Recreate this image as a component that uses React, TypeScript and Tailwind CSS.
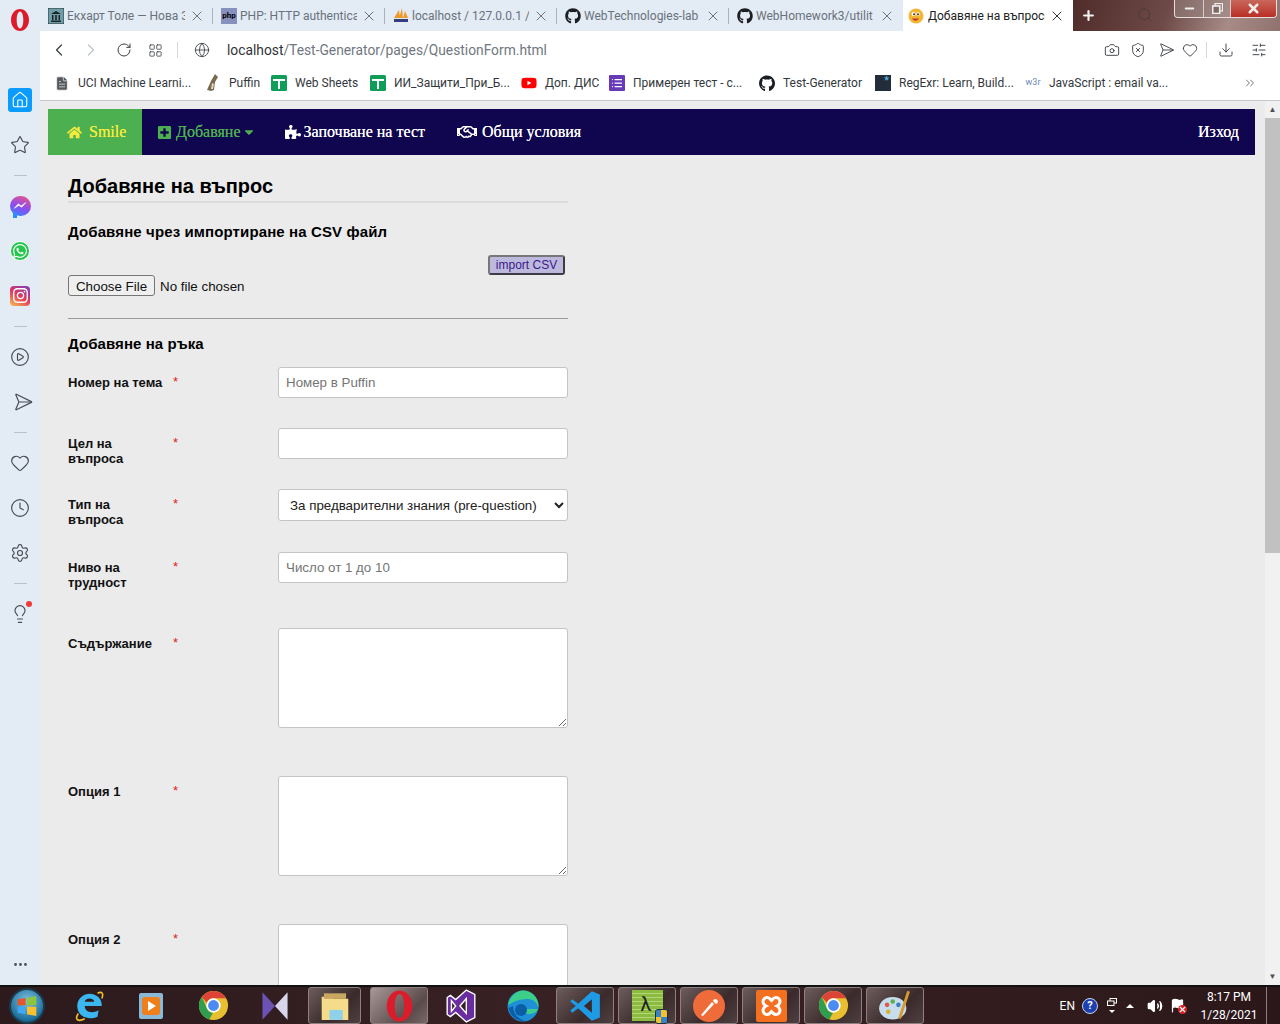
import {
  ChevronLeft,
  ChevronRight,
  RotateCw,
  LayoutGrid,
  Globe,
  Camera,
  ShieldX,
  Send,
  Heart,
  Download,
  SlidersHorizontal,
  X,
  Plus,
  Minus,
  Search,
  Home,
  Star,
  CirclePlay,
  Clock,
  Settings,
  Lightbulb,
  MoreHorizontal,
  ChevronsRight,
  FileText,
  Volume2,
  Flag,
  List,
} from 'lucide-react';
import { FaGithub, FaHome, FaPlusSquare, FaPuzzlePiece, FaRegHandshake, FaCaretDown, FaYoutube, FaWhatsapp, FaInstagram } from 'react-icons/fa';
import type { ReactNode } from 'react';

const uiFont = "font-['Roboto','Noto_Sans',sans-serif]";

const OperaLogo = ({ width, height }: { width: number; height: number }) => (
  <svg width={width} height={height} viewBox="0 0 20 24">
    <path fillRule="evenodd" d="M10 1c5 0 9 4.800 9 11s-4 11-9 11-9-4.800-9-11S5 1 10 1zm0 2.500c-2 0-3.300 3.800-3.300 8.500s1.300 8.500 3.300 8.500 3.300-3.800 3.300-8.500S12 3.500 10 3.500z" fill="#dd1c2b" />
  </svg>
);

const Chrome = ({ size = 32 }: { size?: number }) => (
  <svg width={size} height={size} viewBox="0 0 32 32">
    <circle cx="16" cy="16" r="15" fill="#e8c02f" />
    <path d="M16 1a15 15 0 0 1 13 7.500H16a7.500 7.500 0 0 0-7 4.600L3.900 7.200A15 15 0 0 1 16 1z" fill="#dc4437" />
    <path d="M3.900 7.200 9.500 19.500a7.500 7.500 0 0 0 6 4L11.600 30.400A15 15 0 0 1 3.900 7.200z" fill="#2f9e50" />
    <circle cx="16" cy="16" r="7.400" fill="#fff" />
    <circle cx="16" cy="16" r="5.600" fill="#4c8bf0" />
  </svg>
);

const TabItem = ({ icon, title, width, last }: { icon: ReactNode; title: string; width: string; last?: boolean }) => (
  <div className={`${width} relative flex h-full items-center pl-[8px] pr-[8px]`}>
    <span className="mr-[3px] flex h-4 w-4 shrink-0 items-center justify-center">{icon}</span>
    <span className="min-w-0 flex-1 overflow-hidden whitespace-nowrap pt-[1px] text-[12px] text-[#69727c]">{title}</span>
    <X size={16} strokeWidth={1.2} className="ml-[4px] shrink-0 text-[#4c5560]" />
    {!last && <span className="absolute right-0 top-[8px] h-[16px] w-px bg-[#aab3bd]" />}
  </div>
);

const Bookmark = ({ icon, title, width }: { icon: ReactNode; title: string; width: string }) => (
  <div className={`${width} flex items-center`}>
    <span className="mr-[8px] flex h-[16px] w-[16px] shrink-0 items-center justify-center">{icon}</span>
    <span className="whitespace-nowrap text-[12px] text-[#33383d]">{title}</span>
  </div>
);

const SheetIcon = () => (
  <svg width="16" height="16" viewBox="0 0 16 16">
    <rect width="16" height="16" rx="1.500" fill="#0f9d58" />
    <path d="M2 4h12v2H9v8H7V6H2z" fill="#fff" />
  </svg>
);

const SideCell = ({ children }: { children: ReactNode }) => (
  <div className="flex h-[45px] shrink-0 items-center justify-center">{children}</div>
);

const SideDivider = () => (
  <div className="flex h-[16px] shrink-0 items-center">
    <div className="h-px w-[13px] bg-[#b9c2cc]" />
  </div>
);

const Row = ({ label, height, children }: { label: ReactNode; height: string; children: ReactNode }) => (
  <div className={`${height} flex items-start`}>
    <div className="w-[105px] pt-[8px] text-[13px] font-bold leading-[15px] text-[#111]">{label}</div>
    <div className="w-[105px] pt-[7px] text-[13px] leading-[15px] text-[#e02020]">*</div>
    <div className="w-[290px]">{children}</div>
  </div>
);

const textBox = 'block w-full rounded-[3px] border border-[#c4c4c4] bg-white px-[7px] text-[13.333px] text-[#333] placeholder:text-[#757575] outline-none';

const TaskButton = ({ children, active, width = 'w-[58px]', margin = 'mr-[4px]' }: { children: ReactNode; active?: boolean; width?: string; margin?: string }) => (
  <div
    className={`${width} ${margin} flex h-[37px] shrink-0 items-center justify-center rounded-[3px] border border-[#8d8080] ${
      active ? 'bg-[linear-gradient(135deg,#a99898,#5b4a4a_70%,#7a6868)]' : 'bg-[linear-gradient(135deg,#6d5c5c,#3a2a2b_60%,#4f3f40)]'
    }`}
  >
    {children}
  </div>
);

const TaskPlain = ({ children, width = 'w-[62px]' }: { children: ReactNode; width?: string }) => (
  <div className={`${width} flex h-[37px] shrink-0 items-center justify-center`}>{children}</div>
);

export default function App() {
  return (
    <div className={`flex h-[1024px] w-[1280px] flex-col overflow-hidden bg-[#ebebeb] ${uiFont}`}>
      <div className="flex h-[985px] min-h-0">
        {/* opera sidebar */}
        <aside className="flex w-[40px] shrink-0 flex-col items-center bg-[#e3ebf4] text-[#474d54]">
          <div className="mt-[8px]">
            <OperaLogo width={20} height={24} />
          </div>
          <div className="mt-[46px] flex h-[44px] items-center">
            <div className="flex h-[24px] w-[24px] items-center justify-center rounded-[3px] bg-[#0a9bff]">
              <Home size={18} strokeWidth={1.5} color="#fff" />
            </div>
          </div>
          <SideCell><Star size={20} strokeWidth={1.4} /></SideCell>
          <SideDivider />
          <SideCell>
            <div className="relative flex h-[20px] w-[21px] items-center justify-center rounded-full bg-[linear-gradient(200deg,#f0567e,#8a4df0_55%,#2b8cff)]">
              <svg width="14" height="9" viewBox="0 0 12 8">
                <path d="M1 6.500 4.500 2.500 7 4.500 11 1.500 7.500 5.500 5 3.800z" fill="#fff" stroke="#fff" strokeWidth=".6" />
              </svg>
              <span className="absolute bottom-[-2px] left-[3px] h-[5px] w-[4px] bg-[#2b8cff]" />
            </div>
          </SideCell>
          <SideCell>
            <div className="flex h-[20px] w-[20px] items-center justify-center rounded-full border border-white bg-[#25c64e]">
              <FaWhatsapp size={16} color="#fff" />
            </div>
          </SideCell>
          <SideCell>
            <div className="flex h-[20px] w-[20px] items-center justify-center rounded-[4px] bg-[linear-gradient(30deg,#f9c04a,#e0385f_50%,#7a3fc0)]">
              <FaInstagram size={17} color="#fff" />
            </div>
          </SideCell>
          <SideDivider />
          <SideCell><CirclePlay size={20} strokeWidth={1.4} /></SideCell>
          <SideCell><Send size={20} strokeWidth={1.4} className="rotate-45" /></SideCell>
          <SideDivider />
          <SideCell><Heart size={20} strokeWidth={1.4} /></SideCell>
          <SideCell><Clock size={20} strokeWidth={1.4} /></SideCell>
          <SideCell><Settings size={20} strokeWidth={1.4} /></SideCell>
          <SideDivider />
          <SideCell>
            <div className="relative">
              <Lightbulb size={20} strokeWidth={1.4} />
              <span className="absolute right-[-2px] top-[-3px] h-[6px] w-[6px] rounded-full bg-[#f03a3a]" />
            </div>
          </SideCell>
          <MoreHorizontal size={17} className="mt-auto mb-[12px]" />
        </aside>

        <div className="flex min-w-0 flex-1 flex-col">
          {/* tab strip */}
          <div className="flex h-[31px] shrink-0 items-stretch bg-[#e3ebf4]">
            <TabItem
              width="w-[173px]"
              title="Екхарт Толе — Нова З"
              icon={
                <svg width="16" height="16" viewBox="0 0 16 16">
                  <rect width="16" height="16" fill="#6e9fa8" stroke="#2d3438" />
                  <path d="M3 6 8 3l5 3zM4 7h1.500v5H4zM7.200 7h1.600v5H7.200zM10.500 7H12v5h-1.500zM3 12.500h10V14H3z" fill="#1c2226" />
                </svg>
              }
            />
            <TabItem width="w-[172px]" title="PHP: HTTP authenticat" icon={<div className="flex h-4 w-4 items-center justify-center bg-[#8890bd] text-[8px] font-bold text-black">php</div>} />
            <TabItem
              width="w-[172px]"
              title="localhost / 127.0.0.1 /"
              icon={
                <svg width="16" height="15" viewBox="0 0 16 15">
                  <path d="M1 10 6 2l1 8zM6 10l3-10 1 10zM10 10l2-7 3 7z" fill="#ee9a2b" />
                  <rect x="1" y="11" width="14" height="3" fill="#333f7a" />
                </svg>
              }
            />
            <TabItem width="w-[172px]" title="WebTechnologies-lab" icon={<FaGithub size={16} color="#1b1f23" />} />
            <TabItem width="w-[174px]" last title="WebHomework3/utilit" icon={<FaGithub size={16} color="#1b1f23" />} />
            <div className="flex w-[170px] items-center bg-white pl-[5px] pr-[8px]">
              <svg width="16" height="16" viewBox="0 0 16 16" className="mr-[4px] shrink-0">
                <circle cx="8" cy="8" r="7.500" fill="#f2b632" />
                <circle cx="5.500" cy="6" r="2" fill="#fff" />
                <circle cx="10" cy="6" r="1.800" fill="#fff" />
                <circle cx="6" cy="6.300" r="1" fill="#333" />
                <circle cx="10" cy="6.300" r="1" fill="#333" />
                <path d="M4 10.500c2 3 5 3 7 0z" fill="#c8342c" />
              </svg>
              <span className="min-w-0 flex-1 overflow-hidden whitespace-nowrap pt-[1px] text-[12px] text-[#222]">Добавяне на въпроси</span>
              <X size={16} strokeWidth={1.4} className="ml-[4px] shrink-0 text-[#222]" />
            </div>
            <div className="relative flex flex-1 items-start bg-[linear-gradient(110deg,#4f2b29,#6d4a48_45%,#a78b87_75%,#8f726e)]">
              <Plus size={15} strokeWidth={3.5} color="#f4f0ee" className="ml-[8px] mt-[8px]" />
              <Search size={16} strokeWidth={1.4} className="ml-[41px] mt-[7px] text-[#4c3a38]" />
              <div className="absolute right-[3px] top-0 flex h-[18px] w-[103px] overflow-hidden rounded-b-[4px] border border-t-0 border-[#e5dedc]">
                <div className="flex w-[29px] items-center justify-center border-r border-[#d5cbc9] bg-[#a3938f66]"><Minus size={13} strokeWidth={3.5} color="#eee" /></div>
                <div className="flex w-[27px] items-center justify-center border-r border-[#d5cbc9] bg-[#a3938f66]">
                  <svg width="11" height="11" viewBox="0 0 11 11">
                    <rect x="3" y="0.500" width="7.500" height="7.500" fill="none" stroke="#eee" strokeWidth="1.200" />
                    <rect x="0.700" y="3" width="7" height="7.500" fill="#7e6966" stroke="#eee" strokeWidth="1.600" />
                  </svg>
                </div>
                <div className="flex flex-1 items-center justify-center bg-[linear-gradient(#c9675c,#b92f25)]"><X size={15} strokeWidth={4} color="#f2ecea" /></div>
              </div>
            </div>
          </div>

          {/* address bar */}
          <div className="flex h-[38px] shrink-0 items-center bg-white text-[#3a4046]">
            <ChevronLeft size={20} strokeWidth={1.5} className="ml-[9px]" />
            <ChevronRight size={20} strokeWidth={1.5} className="ml-[12px] text-[#bfc5cb]" />
            <RotateCw size={16} strokeWidth={1.5} className="ml-[15px]" />
            <LayoutGrid size={15} strokeWidth={1.3} className="ml-[16px]" />
            <div className="ml-[14px] h-[16px] w-px bg-[#d5d8dc]" />
            <Globe size={16} strokeWidth={1.3} className="ml-[16px]" />
            <div className="ml-[17px] flex-1 text-[13.8px]">
              <span className="text-[#2f3338]">localhost</span>
              <span className="text-[#6f7780]">/Test-Generator/pages/QuestionForm.html</span>
            </div>
            <Camera size={16} strokeWidth={1.4} />
            <ShieldX size={16} strokeWidth={1.4} className="ml-[10px]" />
            <Send size={16} strokeWidth={1.3} className="ml-[10px] rotate-45" />
            <Heart size={16} strokeWidth={1.4} className="ml-[10px]" />
            <div className="ml-[8px] h-[16px] w-px bg-[#d5d8dc]" />
            <Download size={16} strokeWidth={1.4} className="ml-[11px]" />
            <SlidersHorizontal size={16} strokeWidth={1.4} className="ml-[17px] mr-[13px]" />
          </div>

          {/* bookmarks */}
          <div className="flex h-[32px] shrink-0 items-center border-b border-[#c3c8ce] bg-white pb-[3px] pl-[14px]">
            <Bookmark width="w-[151px]" title="UCI Machine Learni..." icon={<FileText size={17} fill="#55595e" stroke="#fff" strokeWidth={1} />} />
            <Bookmark
              width="w-[66px]"
              title="Puffin"
              icon={
                <svg width="14" height="18" viewBox="0 0 14 18">
                  <path d="M9 0 12 3 9 8 8 16 5 17 1 16 5 7z" fill="#7b6a4e" />
                  <path d="M6 9 8 10 7 15 5 15z" fill="#ddd6c4" />
                </svg>
              }
            />
            <Bookmark width="w-[99px]" title="Web Sheets" icon={<SheetIcon />} />
            <Bookmark width="w-[151px]" title="ИИ_Защити_При_Б..." icon={<SheetIcon />} />
            <Bookmark width="w-[88px]" title="Доп. ДИС" icon={<FaYoutube size={16} color="#f00" />} />
            <Bookmark width="w-[150px]" title="Примерен тест - с..." icon={<div className="flex h-4 w-4 items-center justify-center rounded-[1px] bg-[#673ab7]"><List size={12} color="#fff" strokeWidth={2.5} /></div>} />
            <Bookmark width="w-[116px]" title="Test-Generator" icon={<FaGithub size={17} color="#1b1f23" />} />
            <Bookmark width="w-[150px]" title="RegExr: Learn, Build..." icon={<div className="flex h-4 w-4 items-start justify-end bg-[#232c3b] pr-[2px] text-[11px] leading-[12px] text-[#5ec5ee]">*</div>} />
            <Bookmark width="w-[218px]" title="JavaScript : email va..." icon={<span className="text-[9px] text-[#6b86b8]">w3r</span>} />
            <ChevronsRight size={14} strokeWidth={1.3} className="text-[#444a50]" />
          </div>

          {/* page */}
          <div className="relative flex min-h-0 flex-1 overflow-hidden bg-[#ebebeb]">
            <div className="min-w-0 flex-1 pl-[8px] pt-[8px]">
              <nav className="flex h-[46px] w-[1207px] items-center bg-[#10054f] font-['Liberation_Serif',serif] text-[16px] text-white [text-shadow:0_0_0.5px_currentColor]">
                <div className="flex h-full w-[94px] items-center bg-[#4caf50] pl-[19px] text-[#f6eb3c]">
                  <FaHome size={15} className="mr-[7px]" />
                  Smile
                </div>
                <div className="ml-[15px] flex items-center text-[#4caf50]">
                  <FaPlusSquare size={15} className="mr-[4px]" />
                  Добавяне
                  <FaCaretDown size={14} className="ml-[1px]" />
                </div>
                <div className="ml-[29px] flex items-center">
                  <FaPuzzlePiece size={16} className="mr-[3px]" />
                  Започване на тест
                </div>
                <div className="ml-[32px] flex items-center">
                  <FaRegHandshake size={20} className="mr-[5px]" />
                  Общи условия
                </div>
                <div className="ml-auto mr-[16px]">Изход</div>
              </nav>

              <main className="ml-[20px] w-[500px] font-['Liberation_Sans',Arial,sans-serif] text-[#111]">
                <h1 className="mt-[20px] border-b-2 border-[#dcdcdc] pb-[3px] text-[20px] font-bold leading-[23px] text-black">Добавяне на въпрос</h1>
                <h2 className="mt-[20px] text-[15px] font-bold leading-[17px] tracking-[0.12px] text-black">Добавяне чрез импортиране на CSV файл</h2>
                <div className="mt-[15px] flex justify-end pr-[3px]">
                  <button className="h-[20px] w-[77px] rounded-[3px] border-2 border-[#3c3c46] border-t-[#777] border-l-[#777] bg-[#bdb9dc] text-[12px] leading-[14px] text-[#3c1a8c]">import CSV</button>
                </div>
                <input type="file" className="block h-[21px] w-full text-[13.333px] leading-[21px] text-[#111] file:mr-[5px] file:h-[21px] file:w-[87px] file:rounded-[3px] file:border file:border-[#767676] file:bg-[#efefef] file:pb-[2px] file:text-[13.333px] file:text-[#111]" />
                <hr className="mt-[22px] border-t border-[#9a9a9a]" />
                <h2 className="mt-[16px] text-[15px] font-bold leading-[17px] tracking-[0.08px] text-black">Добавяне на ръка</h2>

                <div className="mt-[15px]">
                  <Row label="Номер на тема" height="h-[61px]">
                    <input placeholder="Номер в Puffin" className={`${textBox} h-[31px]`} />
                  </Row>
                  <Row label={<>Цел на<br />въпроса</>} height="h-[61px]">
                    <input className={`${textBox} h-[31px]`} />
                  </Row>
                  <Row label={<>Тип на<br />въпроса</>} height="h-[63px]">
                    <select className="block h-[32px] w-full appearance-auto rounded-[3px] border border-[#c4c4c4] bg-white pl-[7px] text-[13.333px] text-[#222] outline-none">
                      <option>За предварителни знания (pre-question)</option>
                    </select>
                  </Row>
                  <Row label={<>Ниво на<br />трудност</>} height="h-[76px]">
                    <input placeholder="Число от 1 до 10" className={`${textBox} h-[31px]`} />
                  </Row>
                  <Row label="Съдържание" height="h-[148px]">
                    <textarea className={`${textBox} h-[100px]`} />
                  </Row>
                  <Row label="Опция 1" height="h-[148px]">
                    <textarea className={`${textBox} h-[100px]`} />
                  </Row>
                  <Row label="Опция 2" height="h-[148px]">
                    <textarea className={`${textBox} h-[100px]`} />
                  </Row>
                </div>
              </main>
            </div>
            {/* scrollbar */}
            <div className="flex w-[15px] shrink-0 flex-col items-center bg-[#f1f1f1]">
              <div className="h-[17px] w-full text-center text-[8px] leading-[17px] text-[#505050]">▲</div>
              <div className="h-[435px] w-full bg-[#c1c1c1]" />
              <div className="mt-auto h-[17px] w-full text-center text-[8px] leading-[17px] text-[#505050]">▼</div>
            </div>
          </div>
        </div>
      </div>

      {/* windows taskbar */}
      <footer className="flex h-[39px] shrink-0 items-center border-t-2 border-[#111] bg-[linear-gradient(90deg,#2c1a1c,#3a2225_50%,#2b1719)]">
        <TaskPlain width="w-[54px]">
          <div className="flex h-[36px] w-[36px] items-center justify-center rounded-full border-2 border-[#1c3a4a] bg-[radial-gradient(circle_at_50%_35%,#7fc3e6,#1f6f9c_70%,#123a52)]">
            <svg width="22" height="20" viewBox="0 0 16 15">
              <path d="M1 2.500 7 1.500v5.500H1z" fill="#e2572c" />
              <path d="M8 1.300 15 0v7H8z" fill="#8cc63f" />
              <path d="M1 8h6v5.500L1 12.500z" fill="#3fa9f5" />
              <path d="M8 8h7v7L8 13.700z" fill="#fbc02d" />
            </svg>
          </div>
        </TaskPlain>
        <div className="w-[4px]" />
        <TaskPlain>
          <svg width="30" height="32" viewBox="0 0 28 30">
            <path d="M26 15H10c0 5 6 8 13 4l-1 6c-10 4-19-1-19-10C3 6 12 2 18 4c6 2 8 6 8 11zM10 11h9c-1-4-8-4-9 0z" fill="#3bb6ef" />
            <path d="M4 22C0 28 4 30 10 27M22 3c4-2 6 0 4 5" fill="none" stroke="#f2bf2a" strokeWidth="1.500" />
          </svg>
        </TaskPlain>
        <TaskPlain width="w-[61px]">
          <div className="flex h-[26px] w-[24px] items-center justify-center rounded-[2px] bg-[#8ab9d8]">
            <div className="flex h-[18px] w-[18px] items-center justify-center rounded-[3px] bg-[#ef7f1a]">
              <div className="ml-[2px] h-0 w-0 border-y-[5px] border-l-[8px] border-y-transparent border-l-white" />
            </div>
          </div>
        </TaskPlain>
        <div className="w-px" />
        <TaskPlain><Chrome size={31} /></TaskPlain>
        <TaskPlain>
          <svg width="32" height="32" viewBox="0 0 28 28">
            <path d="M3 2 14 14 3 26z" fill="#6b52b5" />
            <path d="M25 2 14 14 25 26z" fill="#d8d6ea" />
          </svg>
        </TaskPlain>
        <div className="w-[2px]" />
        <TaskButton width="w-[53px]" margin="mr-[9px]">
          <svg width="32" height="31" viewBox="0 0 26 28">
            <path d="M1 6h9l2 2h13v19H1z" fill="#f5dc8a" />
            <rect x="3" y="3" width="20" height="5" fill="#c8a860" />
            <rect x="8" y="18" width="12" height="9" fill="#8fd0ea" />
          </svg>
        </TaskButton>
        <TaskButton active margin="mr-[2px]">
          <OperaLogo width={29} height={34} />
        </TaskButton>
        <TaskPlain>
          <svg width="30" height="34" viewBox="0 0 28 32">
            <path d="M19 1 27 5v22l-8 4-10-9-5 4-3-2V8l3-2 5 4zM5 11v10l4-5zM19 9l-6 7 6 7z" fill="#6a2d9f" stroke="#fff" strokeWidth="1.300" />
          </svg>
        </TaskPlain>
        <TaskPlain>
          <svg width="32" height="32" viewBox="0 0 32 32">
            <circle cx="16" cy="16" r="15.500" fill="#1f8fd6" />
            <path d="M1 15C3 6 10 .5 16 .5 25 .5 31.500 8 31.500 16c0 5-4 8-9 8-4 0-6-2-6-5h15C30 11 25 9 20 9 13 9 7 11 1 15z" fill="#3ccf8a" />
            <path d="M6 16c0 8 6 14 13 15-8 1-16-4-17.500-13z" fill="#0c5da8" />
            <circle cx="14" cy="20" r="6" fill="#0c5da8" />
          </svg>
        </TaskPlain>
        <div className="w-[2px]" />
        <TaskButton>
          <svg width="32" height="32" viewBox="0 0 28 28">
            <path d="M20 1 27 4v20l-7 3-12-11-5 4-2-2 5-4-5-4 2-2 5 4z" fill="#1f9be6" />
            <path d="M20 8v12l-7-6z" fill="#3a2a2b" />
          </svg>
        </TaskButton>
        <TaskButton>
          <div className="relative h-[31px] w-[31px] bg-[#8cbc3f] bg-[repeating-linear-gradient(#8cbc3f_0,#8cbc3f_3px,#b6d47a_3px,#b6d47a_4px)]">
            <span className="absolute left-[9px] top-[3px] text-[20px] leading-[22px] text-[#222]">λ</span>
            <div className="absolute bottom-[-3px] right-[-5px] grid h-[15px] w-[13px] grid-cols-2 overflow-hidden rounded-[3px] border border-[#20303a] bg-[#3b82c4]">
              <span className="bg-[#3b82c4]" />
              <span className="bg-[#f2c230]" />
              <span className="bg-[#f2c230]" />
              <span className="bg-[#3b82c4]" />
            </div>
          </div>
        </TaskButton>
        <TaskButton>
          <svg width="32" height="32" viewBox="0 0 32 32">
            <circle cx="16" cy="16" r="16" fill="#ef6c3a" />
            <path d="M8 25 19 12l2 2L10 26zM20 11a2.500 2.500 0 1 1 3 3z" fill="#fff" />
          </svg>
        </TaskButton>
        <TaskButton>
          <svg width="31" height="32" viewBox="0 0 31 32">
            <rect width="31" height="32" rx="2" fill="#f2701f" />
            <path d="M9 8c4-2 5 1 6.500 2.500C17 9 18 6 22 8c4 3 1 7-1 8 2 1 5 5 1 8-4 2-5-1-6.500-2.500C14 23 13 26 9 24c-4-3-1-7 1-8-2-1-5-5-1-8z" fill="none" stroke="#fff" strokeWidth="3" />
          </svg>
        </TaskButton>
        <TaskButton><Chrome size={31} /></TaskButton>
        <TaskButton>
          <svg width="34" height="34" viewBox="0 0 30 30">
            <ellipse cx="13" cy="17" rx="12" ry="10" fill="#c7dcec" />
            <circle cx="8" cy="14" r="2" fill="#e05a4a" />
            <circle cx="13" cy="11" r="2" fill="#5ab050" />
            <circle cx="18" cy="14" r="2" fill="#3f7ec4" />
            <circle cx="9" cy="20" r="2" fill="#d8b030" />
            <path d="M27 2 19 26" stroke="#d89a30" strokeWidth="2.500" />
          </svg>
        </TaskButton>

        <div className="ml-auto flex items-center text-[12px] text-white">
          <span>EN</span>
          <div className="ml-[7px] flex h-[16px] w-[16px] items-center justify-center rounded-full border border-[#c7d4e8] bg-[#1d3fb0] text-[11px] font-bold leading-none text-white">?</div>
          <div className="ml-[9px] flex flex-col items-center">
            <svg width="10" height="9" viewBox="0 0 10 9">
              <rect x="3" y="0.500" width="6.500" height="4.500" fill="none" stroke="#fff" />
              <rect x="0.500" y="3" width="6.500" height="4.500" fill="#33201f" stroke="#fff" />
            </svg>
            <div className="mt-[3px] h-0 w-0 border-x-[3px] border-t-[3px] border-x-transparent border-t-white" />
          </div>
          <div className="ml-[9px] h-0 w-0 border-x-[4px] border-b-[4px] border-x-transparent border-b-white" />
          <Volume2 size={16} fill="#fff" className="ml-[13px]" />
          <div className="relative ml-[7px]">
            <Flag size={15} fill="#fff" />
            <X size={9} strokeWidth={3} className="absolute bottom-[-1px] right-[-2px] rounded-full bg-[#d8232a]" />
          </div>
          <div className="ml-[13px] w-[62px] text-center text-[12px] leading-[18px]">
            <div>8:17 PM</div>
            <div>1/28/2021</div>
          </div>
          <div className="ml-[6px] h-[37px] w-[14px] border-l border-[#8d8080]" />
        </div>
      </footer>
    </div>
  );
}
